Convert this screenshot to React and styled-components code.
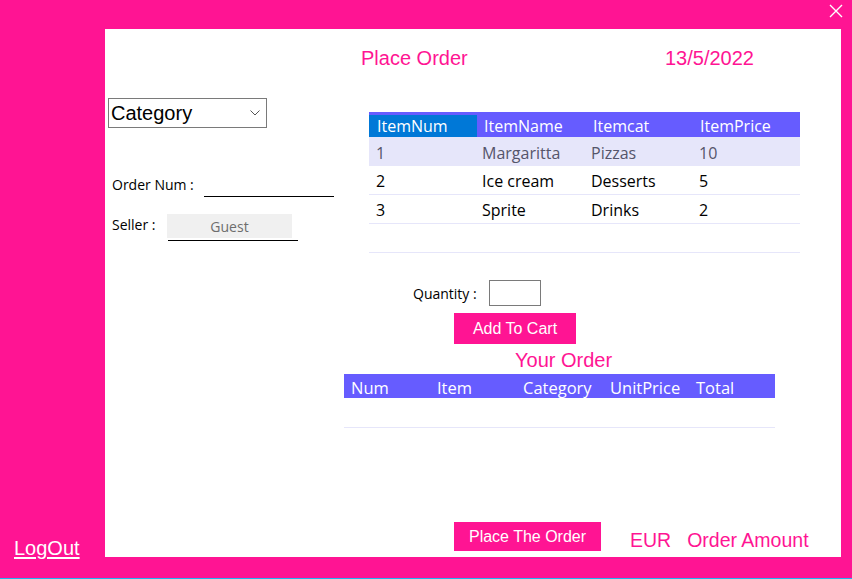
import React from "react";
import styled, { createGlobalStyle } from "styled-components";

const GlobalStyle = createGlobalStyle`
  html, body {
    margin: 0;
    padding: 0;
    background: #ff1493;
  }
`;

const Window = styled.div`
  width: 852px;
  height: 579px;
  background: #ff1493;
  display: grid;
  grid-template-columns: 105px 736px 1fr;
  grid-template-rows: 29px 528px 1fr;
  font-family: "Liberation Sans", Arial, sans-serif;
  border-bottom: 1px solid #1fb4f0;
  box-sizing: border-box;
`;

const TopBar = styled.div`
  grid-column: 1 / -1;
  display: flex;
  justify-content: flex-end;
  align-items: flex-start;
  padding: 4px 9px 0 0;
`;

const CloseButton = styled.button`
  border: none;
  background: transparent;
  padding: 0;
  width: 14px;
  height: 14px;
  display: flex;
`;

const SideStrip = styled.div`
  display: flex;
  flex-direction: column;
  justify-content: flex-end;
  padding: 0 0 0 14px;
`;

const LogOutLink = styled.a`
  color: #fff;
  font-size: 20px;
  line-height: 24px;
  margin-bottom: -3px;
  text-decoration: underline;
  text-underline-offset: 2px;
  cursor: pointer;
`;

const Panel = styled.div`
  background: #fff;
  display: grid;
  grid-template-columns: 239px 1fr;
`;

const LeftColumn = styled.div`
  display: flex;
  flex-direction: column;
  padding: 69px 0 0 3px;
  font-family: "Open Sans", "Noto Sans", sans-serif;
`;

const CategorySelect = styled.div`
  width: 159px;
  height: 30px;
  box-sizing: border-box;
  border: 1px solid #7a7a7a;
  display: flex;
  align-items: center;
  justify-content: space-between;
  padding: 0 6px 0 2px;
  font-family: "Liberation Sans", Arial, sans-serif;
  font-size: 20px;
  color: #000;
`;

const FieldRow = styled.div`
  display: flex;
  align-items: ${(p) => (p.$top ? "flex-start" : "flex-end")};
  margin-top: ${(p) => p.$mt}px;
  padding-left: 4px;
  font-size: 14px;
  color: #000;
`;

const FieldLabel = styled.span`
  width: ${(p) => p.$w}px;
  line-height: 18px;
  margin-top: ${(p) => p.$mt || 0}px;
`;

const UnderlineField = styled.div`
  width: 130px;
  height: 1px;
  background: #000;
  margin-bottom: -3px;
`;

const SellerBox = styled.div`
  display: flex;
  flex-direction: column;
`;

const GuestInput = styled.div`
  width: 125px;
  height: 24px;
  background: #f0f0f0;
  color: #6d6d6d;
  font-size: 14px;
  display: flex;
  align-items: center;
  justify-content: center;
`;

const GuestLine = styled.div`
  width: 130px;
  height: 1px;
  background: #000;
  margin: 2px 0 0 1px;
`;

const RightColumn = styled.div`
  display: flex;
  flex-direction: column;
  font-family: "Open Sans", "Noto Sans", sans-serif;
`;

const PinkText = styled.div`
  color: #ff1493;
  font-family: "Liberation Sans", Arial, sans-serif;
  font-size: 20px;
  line-height: 24px;
`;

const TitleRow = styled.div`
  display: grid;
  grid-template-columns: 304px auto;
  padding: 17px 0 0 17px;
`;

const Table = styled.div`
  width: 431px;
  margin-left: ${(p) => p.$ml}px;
  margin-top: ${(p) => p.$mt}px;
  display: flex;
  flex-direction: column;
`;

const TableRow = styled.div`
  display: grid;
  grid-template-columns: ${(p) => p.$cols};
  height: ${(p) => p.$h}px;
  box-sizing: border-box;
  background: ${(p) => p.$bg || "#fff"};
  border-bottom: ${(p) => (p.$line ? "1px solid #e6e6fa" : "none")};
  color: ${(p) => p.$color || "#000"};
  font-size: ${(p) => p.$fs || 16}px;
  padding-top: ${(p) => p.$pt || 0}px;
`;

const Cell = styled.div`
  display: flex;
  align-items: center;
  padding-left: ${(p) => p.$pl || 7}px;
  background: ${(p) => p.$bg || "transparent"};
  white-space: nowrap;
`;

const QuantityRow = styled.div`
  display: flex;
  align-items: center;
  margin: 27px 0 0 69px;
  font-size: 14px;
  color: #000;
`;

const QuantityLabel = styled.span`
  width: 76px;
`;

const QuantityInput = styled.div`
  width: 52px;
  height: 26px;
  box-sizing: border-box;
  border: 1px solid #7a7a7a;
`;

const PinkButton = styled.button`
  align-self: flex-start;
  margin: ${(p) => p.$mt}px 0 0 110px;
  width: ${(p) => p.$w}px;
  height: ${(p) => p.$h}px;
  border: none;
  background: #ff1493;
  color: #fff;
  font-family: "Liberation Sans", Arial, sans-serif;
  font-size: 16px;
  padding: 0;
`;

const SectionTitle = styled(PinkText)`
  margin: 4px 0 0 171px;
`;

const FooterRow = styled.div`
  display: flex;
  align-items: flex-end;
  margin-top: 94px;
`;

const FooterButton = styled(PinkButton)`
  margin: 0 0 0 110px;
`;

const AmountText = styled(PinkText)`
  font-size: 19.5px;
  margin: 0 0 -1px ${(p) => p.$ml}px;
`;

const BottomEdge = styled.div`
  grid-column: 1 / -1;
`;

const items = [
  { num: 1, name: "Margaritta", cat: "Pizzas", price: 10 },
  { num: 2, name: "Ice cream", cat: "Desserts", price: 5 },
  { num: 3, name: "Sprite", cat: "Drinks", price: 2 },
];

const itemCols = "108px 108px 108px 107px";
const orderCols = "86px 86px 87px 86px 86px";

const App = () => {
  return (
    <>
      <GlobalStyle />
      <Window>
        <TopBar>
          <CloseButton aria-label="close">
            <svg width="14" height="14" viewBox="0 0 14 14">
              <path d="M1 1 L13 13 M13 1 L1 13" stroke="#fff" strokeWidth="1.4" />
            </svg>
          </CloseButton>
        </TopBar>

        <SideStrip>
          <LogOutLink>LogOut</LogOutLink>
        </SideStrip>

        <Panel>
          <LeftColumn>
            <CategorySelect>
              <span>Category</span>
              <svg width="10" height="6" viewBox="0 0 10 6">
                <path d="M0.5 0.5 L5 5 L9.5 0.5" stroke="#555" strokeWidth="1" fill="none" />
              </svg>
            </CategorySelect>

            <FieldRow $mt={48}>
              <FieldLabel $w={92}>Order Num :</FieldLabel>
              <UnderlineField />
            </FieldRow>

            <FieldRow $mt={20} $top>
              <FieldLabel $w={55} $mt={2}>Seller :</FieldLabel>
              <SellerBox>
                <GuestInput>Guest</GuestInput>
                <GuestLine />
              </SellerBox>
            </FieldRow>
          </LeftColumn>

          <RightColumn>
            <TitleRow>
              <PinkText>Place Order</PinkText>
              <PinkText>13/5/2022</PinkText>
            </TitleRow>

            <Table $ml={25} $mt={42}>
              <TableRow $cols={itemCols} $h={25} $bg="#665cff" $color="#fff" $pt={3}>
                <Cell $bg="#0078d7" $pl={8}>ItemNum</Cell>
                <Cell>ItemName</Cell>
                <Cell $pl={8}>Itemcat</Cell>
                <Cell>ItemPrice</Cell>
              </TableRow>
              {items.map((it, i) => (
                <TableRow
                  key={it.num}
                  $cols={itemCols}
                  $h={29}
                  $pt={2}
                  $bg={i === 0 ? "#e6e6fa" : "#fff"}
                  $color={i === 0 ? "#55556a" : "#000"}
                  $line={i > 0}
                >
                  <Cell>{it.num}</Cell>
                  <Cell $pl={5}>{it.name}</Cell>
                  <Cell $pl={6}>{it.cat}</Cell>
                  <Cell $pl={6}>{it.price}</Cell>
                </TableRow>
              ))}
              <TableRow $cols={itemCols} $h={29} $line />
            </Table>

            <QuantityRow>
              <QuantityLabel>Quantity :</QuantityLabel>
              <QuantityInput />
            </QuantityRow>

            <PinkButton $mt={7} $w={122} $h={31}>Add To Cart</PinkButton>

            <SectionTitle>Your Order</SectionTitle>

            <Table $ml={0} $mt={2}>
              <TableRow $cols={orderCols} $h={24} $bg="#665cff" $color="#fff" $fs={16.5} $pt={2}>
                <Cell>Num</Cell>
                <Cell $pl={7}>Item</Cell>
                <Cell $pl={7}>Category</Cell>
                <Cell $pl={7}>UnitPrice</Cell>
                <Cell $pl={7}>Total</Cell>
              </TableRow>
              <TableRow $cols={orderCols} $h={30} $line />
            </Table>

            <FooterRow>
              <FooterButton $w={147} $h={29}>Place The Order</FooterButton>
              <AmountText $ml={29}>EUR</AmountText>
              <AmountText $ml={16}>Order Amount</AmountText>
            </FooterRow>
          </RightColumn>
        </Panel>
        <BottomEdge />
      </Window>
    </>
  );
};

export default App;
